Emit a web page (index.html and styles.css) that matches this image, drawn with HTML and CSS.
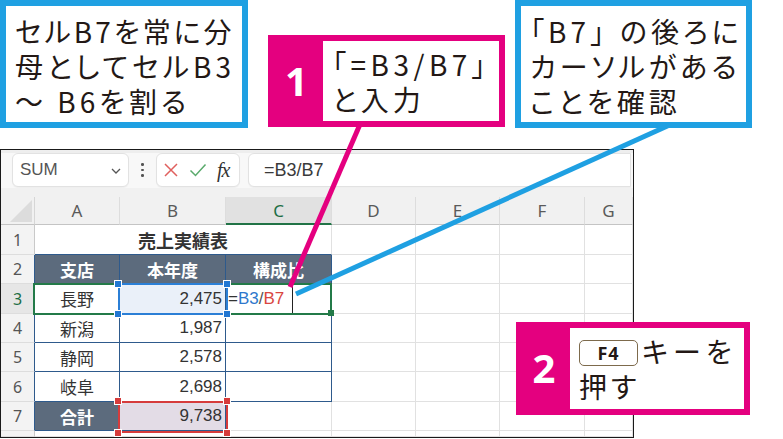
FILE: index.html
```html
<!DOCTYPE html>
<html lang="ja">
<head>
<meta charset="utf-8">
<title>Excel 構成比</title>
<link rel="stylesheet" href="styles.css">
</head>
<body>
<div class="stage">
  <div class="excel">
    <div class="fbar">
      <div class="namebox">
        <span class="nb-text">SUM</span>
        <svg class="chev" width="10" height="6" viewBox="0 0 10 6"><path d="M1 1 L5 5 L9 1" fill="none" stroke="#555" stroke-width="1.3"/></svg>
      </div>
      <div class="vdots"><i></i><i></i><i></i></div>
      <div class="fxbox">
        <svg width="16" height="16" viewBox="0 0 16 16"><path d="M2 2 L14 14 M14 2 L2 14" stroke="#e0605e" stroke-width="1.5" fill="none"/></svg>
        <svg width="18" height="16" viewBox="0 0 18 16"><path d="M1.5 8.5 L6.5 13.5 L16.5 2.5" stroke="#5aaa6c" stroke-width="1.5" fill="none"/></svg>
        <span class="fx">fx</span>
      </div>
      <div class="formula">=B3/B7</div>
    </div>
    <div class="sheet">
      <div class="band"></div>
      <div class="grid">
        <div class="cell corner"><svg width="22" height="22" viewBox="0 0 22 22"><path d="M22 0 L22 22 L0 22 Z" fill="#dcdcdc"/></svg></div>
        <div class="cell ch">A</div>
        <div class="cell ch">B</div>
        <div class="cell ch sel">C</div>
        <div class="cell ch">D</div>
        <div class="cell ch">E</div>
        <div class="cell ch">F</div>
        <div class="cell ch">G</div>

        <div class="cell rh">1</div>
        <div class="cell title">売上実績表</div>
        <div class="cell"></div><div class="cell"></div><div class="cell"></div><div class="cell"></div>

        <div class="cell rh tl">2</div>
        <div class="cell hd">支店</div>
        <div class="cell hd">本年度</div>
        <div class="cell hd">構成比</div>
        <div class="cell"></div><div class="cell"></div><div class="cell"></div><div class="cell"></div>

        <div class="cell rh tl rsel">3</div>
        <div class="cell tb ctr">長野</div>
        <div class="cell tb num refb">2,475</div>
        <div class="cell tb edit"><span class="op">=</span><span class="rb">B3</span><span class="sl">/</span><span class="rr">B7</span></div>
        <div class="cell"></div><div class="cell"></div><div class="cell"></div><div class="cell"></div>

        <div class="cell rh tl">4</div>
        <div class="cell tb ctr">新潟</div>
        <div class="cell tb num">1,987</div>
        <div class="cell tb"></div>
        <div class="cell"></div><div class="cell"></div><div class="cell"></div><div class="cell"></div>

        <div class="cell rh tl">5</div>
        <div class="cell tb ctr">静岡</div>
        <div class="cell tb num">2,578</div>
        <div class="cell tb"></div>
        <div class="cell"></div><div class="cell"></div><div class="cell"></div><div class="cell"></div>

        <div class="cell rh tl">6</div>
        <div class="cell tb ctr">岐阜</div>
        <div class="cell tb num">2,698</div>
        <div class="cell tb"></div>
        <div class="cell"></div><div class="cell"></div><div class="cell"></div><div class="cell"></div>

        <div class="cell rh tl">7</div>
        <div class="cell hd">合計</div>
        <div class="cell tb num refr">9,738</div>
        <div class="cell"></div>
        <div class="cell"></div><div class="cell"></div><div class="cell"></div><div class="cell"></div>

        <div class="cell rh"></div>
        <div class="cell"></div><div class="cell"></div><div class="cell"></div><div class="cell"></div><div class="cell"></div><div class="cell"></div><div class="cell"></div>

        <div class="ov green"></div>
        <div class="ov blue-sel"></div>
        <div class="ov red-sel"></div>
        <div class="caret"></div>
        <div class="hdl hb h1"></div><div class="hdl hb h2"></div><div class="hdl hb h3"></div><div class="hdl hb h4"></div>
        <div class="hdl hr h5"></div><div class="hdl hr h6"></div><div class="hdl hr h7"></div><div class="hdl hr h8"></div>
        <div class="hdl hg h9"></div>
      </div>
    </div>
  </div>

  <svg class="leaders" width="783" height="439" viewBox="0 0 783 439">
    <line x1="290" y1="287" x2="361" y2="122" stroke="#e4007f" stroke-width="5"/>
    <line x1="296" y1="294" x2="674" y2="123" stroke="#1fa0e2" stroke-width="5"/>
  </svg>

  <div class="callout cb c-tl">
    <p class="l1">セルB7を常に分</p>
    <p>母としてセルB3</p>
    <p>～ B6を割る</p>
  </div>

  <div class="callout cp c-1">
    <div class="num">1</div>
    <div class="body">
      <p class="wide">「=B3/B7」</p>
      <p>と入力</p>
    </div>
  </div>

  <div class="callout cb c-tr">
    <p>「B7<span class="fw">」</span>の後ろに</p>
    <p>カーソルがある</p>
    <p>ことを確認</p>
  </div>

  <div class="callout cp c-2">
    <div class="num">2</div>
    <div class="body">
      <p><span class="key">F4</span><span class="spaced">キーを</span></p>
      <p>押す</p>
    </div>
  </div>
</div>
</body>
</html>
```

FILE: styles.css
```css
* { box-sizing: border-box; }
html, body { margin: 0; padding: 0; background: #ffffff; }
body { font-family: "Noto Sans CJK JP", "Noto Sans", sans-serif; }

.stage {
  position: relative;
  width: 783px;
  height: 439px;
  overflow: hidden;
  background: #ffffff;
}

/* ---------- Excel window ---------- */
.excel {
  margin-top: 149px;
  width: 634px;
  height: 289px;
  border: 1px solid #1a1a1a;
  display: flex;
  flex-direction: column;
  background: #ffffff;
}

.fbar {
  height: 38px;
  flex: none;
  background: #f8f8f8;
  border-top: 3px solid #eeeeee;
  display: flex;
  align-items: flex-start;
  padding-left: 11px;
}

.namebox, .fxbox, .formula {
  height: 34px;
  background: #ffffff;
  border: 1px solid #e2e2e2;
  border-radius: 6px;
  box-shadow: 0 1px 1px rgba(0,0,0,0.04);
}

.namebox {
  width: 117px;
  display: flex;
  align-items: center;
  justify-content: space-between;
  padding: 0 7px 0 7px;
}
.nb-text {
  font-family: "Liberation Sans", Arial, sans-serif;
  font-size: 17px;
  color: #555555;
}
.chev { display: block; margin-top: 1px; }

.vdots {
  width: 27px;
  height: 34px;
  display: flex;
  flex-direction: column;
  align-items: center;
  justify-content: center;
  gap: 3px;
}
.vdots i {
  display: block;
  width: 2.5px;
  height: 2.5px;
  border-radius: 50%;
  background: #555555;
}

.fxbox {
  width: 84px;
  display: flex;
  align-items: center;
  gap: 10px;
  padding-left: 6px;
}
.fxbox svg { display: block; }
.fx {
  font-family: "Liberation Serif", "Times New Roman", serif;
  font-style: italic;
  font-size: 20px;
  color: #333333;
  letter-spacing: -1px;
}

.formula {
  flex: 1;
  margin-left: 8px;
  margin-right: 2px;
  font-family: "Liberation Sans", Arial, sans-serif;
  font-size: 18px;
  color: #3a3a3a;
  display: flex;
  align-items: center;
  padding-left: 15px;
  border-top-right-radius: 0;
  border-bottom-right-radius: 0;
}

/* ---------- Sheet ---------- */
.sheet {
  flex: 1;
  display: flex;
  flex-direction: column;
  min-height: 0;
}
.band {
  height: 9px;
  flex: none;
  background: #f1f1f1;
}
.grid {
  position: relative;
  flex: 1;
  display: grid;
  grid-template-columns: 34px 85px 106px 106px 84px 84px 85px 1fr;
  grid-template-rows: 28px 30px 29px 30px 29px 29px 30px 29px 1fr;
}

.cell {
  border-right: 1px solid #e1e1e1;
  border-bottom: 1px solid #e1e1e1;
  display: flex;
  align-items: center;
  font-size: 17px;
  color: #333333;
  white-space: nowrap;
  overflow: hidden;
  background: #ffffff;
}

.corner {
  background: #f1f1f1;
  border-right-color: #d6d6d6;
  border-bottom-color: #c4c4c4;
  align-items: flex-end;
  justify-content: flex-end;
  padding: 0 2px 2px 0;
}
.corner svg { display: block; }

.ch {
  background: #f1f1f1;
  justify-content: center;
  font-family: "Noto Sans", "Liberation Sans", sans-serif;
  font-size: 17px;
  color: #5a5a5a;
  border-right-color: #dddddd;
  border-bottom-color: #c4c4c4;
}
.ch.sel {
  background: #e1e1e1;
  color: #1d6e45;
  border-bottom: 2px solid #217346;
}

.rh {
  background: #f3f3f3;
  justify-content: center;
  font-family: "Noto Sans", "Liberation Sans", sans-serif;
  font-size: 16px;
  color: #555555;
  border-right-color: #c9c9c9;
  border-bottom-color: #dddddd;
}
.rh.tl { border-right-color: #2e5a8c; }
.rh.rsel { color: #1d6e45; background: #e6e6e6; }

.title {
  grid-column: span 3;
  justify-content: center;
  font-weight: 700;
  font-size: 18px;
  color: #333333;
  border-bottom-color: #2e5a8c;
}

.hd {
  background: #5c6b7d;
  color: #ffffff;
  font-weight: 700;
  font-size: 17px;
  justify-content: center;
  border-right-color: #2e5a8c;
  border-bottom-color: #2e5a8c;
}

.tb {
  border-right-color: #2e5a8c;
  border-bottom-color: #2e5a8c;
}
.ctr { justify-content: center; }
.num {
  justify-content: flex-end;
  padding-right: 3px;
  font-family: "Liberation Sans", Arial, sans-serif;
  font-size: 17px;
  color: #333333;
}
.refb { background: #eaf0f9; }
.refr { background: #e3dce6; }

.edit {
  font-family: "Liberation Sans", Arial, sans-serif;
  font-size: 17px;
  padding-left: 2px;
}
.op { color: #333333; }
.rb { color: #2f78cc; }
.sl { color: #555555; }
.rr { color: #d9463f; }

/* overlays within grid: selection borders */
.ov {
  position: absolute;
  pointer-events: none;
}
.green {
  left: 32px; top: 86px; width: 299px; height: 32px;
  border: 2px solid #237a48;
}
.blue-sel {
  left: 117px; top: 86px; width: 110px; height: 32px;
  border: 2px solid #2b7fd6;
}
.red-sel {
  left: 117px; top: 204px; width: 110px; height: 32px;
  border: 2px solid #d63c3c;
}
.caret {
  position: absolute;
  left: 291px; top: 88px;
  width: 1px; height: 28px;
  background: #222222;
}
.hdl {
  position: absolute;
  width: 7px; height: 7px;
}
.hb { background: #2177d2; border: 1px solid #ffffff; width: 8px; height: 8px; }
.hr { background: #d63c3c; border: 1px solid #ffffff; width: 8px; height: 8px; }
.hg { background: #237a48; width: 6px; height: 6px; }
.h1 { left: 113px; top: 83px; }
.h2 { left: 222px; top: 83px; }
.h3 { left: 113px; top: 113px; }
.h4 { left: 222px; top: 113px; }
.h5 { left: 113px; top: 200px; }
.h6 { left: 222px; top: 200px; }
.h7 { left: 113px; top: 232px; }
.h8 { left: 222px; top: 232px; }
.h9 { left: 327px; top: 113px; }

/* ---------- leader lines ---------- */
.leaders {
  position: absolute;
  left: 0;
  top: 0;
  pointer-events: none;
}

/* ---------- callouts ---------- */
.callout {
  position: absolute;
  background: #ffffff;
  color: #231815;
  font-family: "Noto Sans CJK JP", "Noto Sans", sans-serif;
  font-size: 28px;
  font-feature-settings: "palt";
  letter-spacing: 4px;
  line-height: 35px;
}
.callout p { margin: 0; white-space: nowrap; }
.callout .l1 { letter-spacing: 3px; }
.fw { font-feature-settings: normal; letter-spacing: 2px; }
.wide { letter-spacing: 4.5px; }

.cb {
  border: 6px solid #1fa0e2;
  padding: 8px 0 0 9px;
}
.c-tl { left: 0; top: 0; width: 248px; height: 128px; }
.c-tr { left: 515px; top: 0; width: 237px; height: 128px; }

.cp {
  background: #e4007f;
  display: flex;
  padding: 6px 6px 6px 0;
}
.cp .num {
  width: 55px;
  flex: none;
  display: flex;
  align-items: center;
  justify-content: center;
  color: #ffffff;
  font-family: "Noto Sans", "Liberation Sans", sans-serif;
  font-weight: 700;
  font-size: 40px;
  letter-spacing: 0;
  padding: 0 0 2px 2px;
}
.cp .body {
  flex: 1;
  background: #ffffff;
  padding: 6px 0 0 9px;
}
.c-1 { left: 268px; top: 35px; width: 237px; height: 92px; }
.c-2 { left: 516px; top: 322px; width: 234px; height: 93px; }
.c-2 .num { width: 54px; }

.key {
  display: inline-flex;
  align-items: center;
  justify-content: center;
  width: 59px;
  height: 26px;
  border: 1.5px solid #7d6a4c;
  border-radius: 5px;
  font-family: "Noto Sans", "Liberation Sans", sans-serif;
  font-weight: 700;
  font-size: 18px;
  letter-spacing: 1px;
  line-height: 1;
  vertical-align: 3px;
  margin-right: 4px;
  color: #231815;
}
.spaced { letter-spacing: 5px; }
```
